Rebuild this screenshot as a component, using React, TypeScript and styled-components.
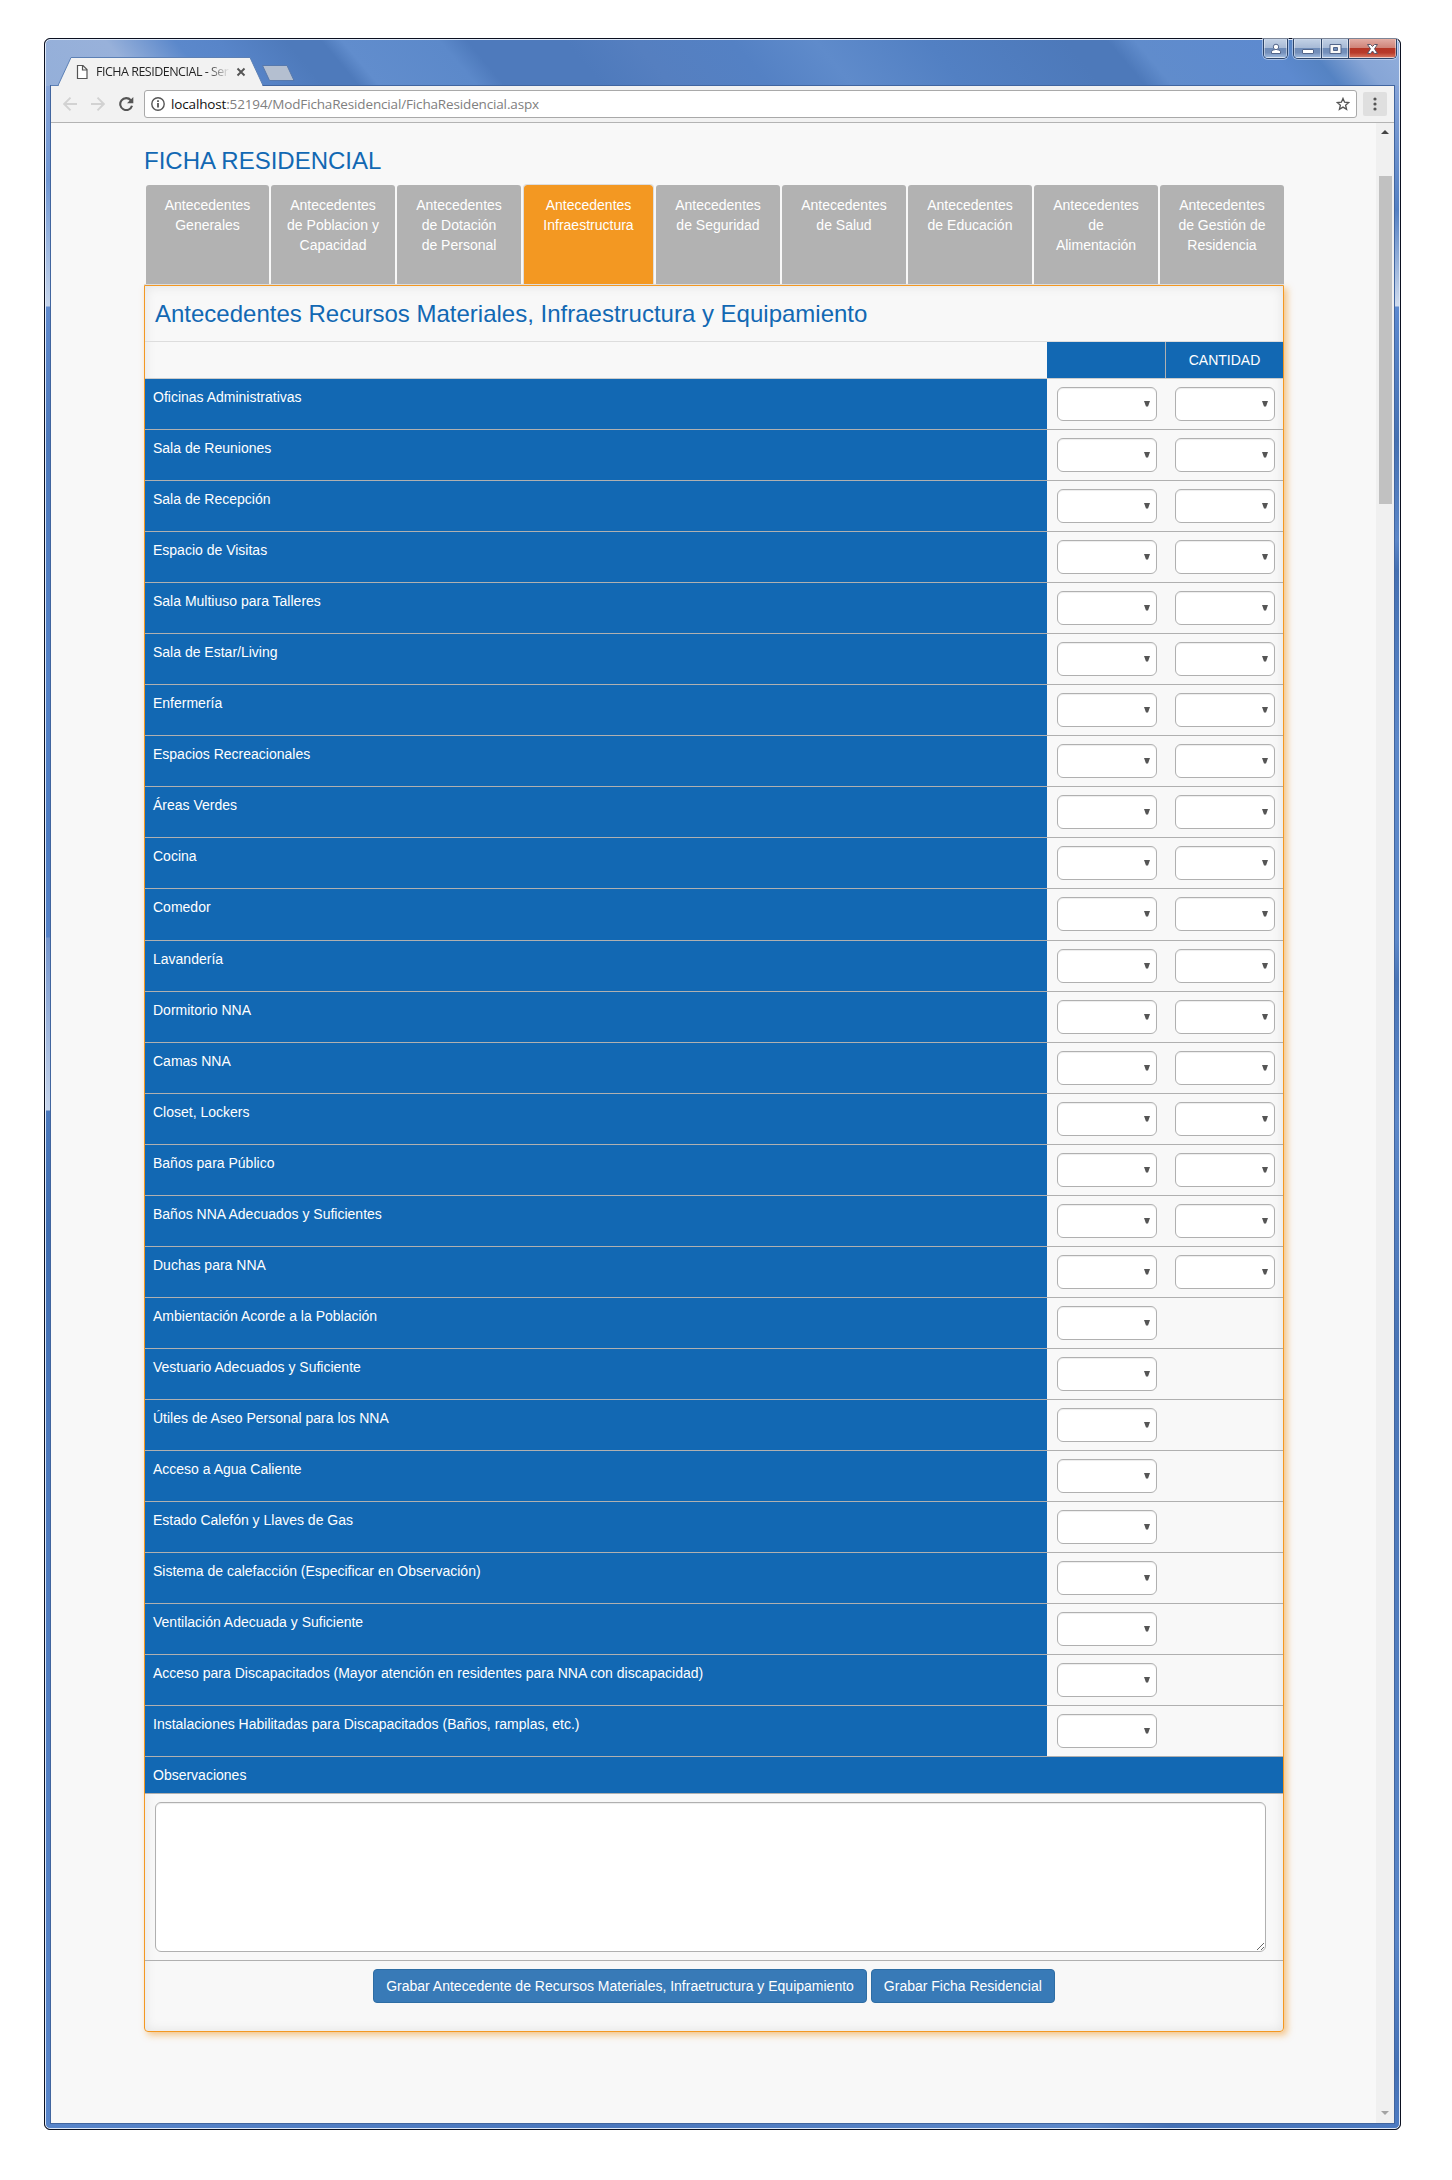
import React from "react";
import styled, { createGlobalStyle } from "styled-components";

const BLUE = "#1268b3";
const LINE = "#b0b0b0";
const ORANGE = "#f39822";

const Global = createGlobalStyle`
  *, *::before, *::after { box-sizing: border-box; }
  body {
    margin: 0;
    background: #fff;
    font-family: "Liberation Sans", Arial, sans-serif;
    font-size: 14px;
    line-height: 20px;
  }
`;

/* ---------- Browser window ---------- */

const Desktop = styled.div`
  width: 1452px;
  height: 2180px;
  padding: 38px 0 0 44px;
  overflow: hidden;
`;

const WindowFrame = styled.div`
  width: 1357px;
  height: 2092px;
  border: 1px solid #0b1020;
  border-radius: 6px;
  background: #0b1020;
`;

const Glass = styled.div`
  height: 100%;
  display: flex;
  flex-direction: column;
  border: 1px solid #dfe9f8;
  border-radius: 5px;
  padding: 0 5px 5px;
  background:
    linear-gradient(50deg, #94afd9 0%, #98b1da 7%, #5b88cb 12%, #5885c9 15%, #4e7abb 20%, #4e7abb 22.5%, #618dcd 24%, #5c89ca 31%, #4e7abc 33%, #4e7abc 40%, #557fc0 45%, #5481c4 52%, #5f8bcb 58%, #5280c3 66%, #4d79ba 76%, #4d79ba 79%, #608ccc 81%, #5d8acf 90%, #5583c3 93%, #86a5d6 96%, #92afdc 100%) 0 0 / 100% 46px no-repeat,
    linear-gradient(180deg, #86a4d8 46px, #6f96d3 140px, #c6d5ec 266px, #5f8ace 267px, #4d79bc 400px, #5482c8 640px, #4c7bc2 800px, #5582c8 897px, #7495cd 898px, #c6d5ec 1070px, #4b79bd 1071px, #3f6db1 1190px, #4c79bd 1400px, #5885ca 100%) 0 0 / 5px 100% no-repeat,
    linear-gradient(180deg, #86a4d8 46px, #5480c3 170px, #d0dcee 266px, #5d8ad0 267px, #4671b2 400px, #5c87c8 500px, #4570b2 530px, #5d88c9 700px, #5d88c9 900px, #4a75b6 940px, #5d88c9 1080px, #4a75b6 1300px, #5a86c8 1900px, #4571b5 2030px, #4d7bc2 100%) 100% 0 / 5px 100% no-repeat,
    linear-gradient(90deg, #5885ca 0%, #4a77bd 40%, #5d88c9 77%, #4571b5 83%, #4d7bc2 100%);
`;

const TitleBar = styled.div`
  height: 46px;
  flex: none;
  display: flex;
  justify-content: space-between;
  align-items: flex-start;
`;

const TabStrip = styled.div`
  position: relative;
  width: 260px;
  height: 46px;
  z-index: 1;
`;

const TabShape = styled.svg`
  display: block;
`;

const TabCaption = styled.div`
  position: absolute;
  left: 45px;
  top: 23px;
  width: 140px;
  height: 18px;
  white-space: nowrap;
  font: 12.5px/18px "Open Sans", "Noto Sans", sans-serif;
  letter-spacing: -0.5px;
  background: linear-gradient(90deg, #222 111px, #f2f2f2 134px);
  background-clip: text;
  -webkit-background-clip: text;
  color: transparent;
`;

const Controls = styled.div`
  display: flex;
  gap: 5px;
  margin: -1px -3px 0 0;
`;

const ControlGroup = styled.div`
  display: flex;
  height: 20px;
  border: 1px solid #2c4469;
  border-top: 0;
  border-radius: 0 0 5px 5px;
  box-shadow: 0 0 0 1px rgba(220, 232, 250, 0.55);
  overflow: hidden;
`;

const ControlButton = styled.div<{ $w: number; $close?: boolean }>`
  width: ${(p) => p.$w}px;
  display: flex;
  align-items: center;
  justify-content: center;
  border: 1px solid rgba(255, 255, 255, 0.45);
  background: ${(p) =>
    p.$close
      ? "linear-gradient(180deg, #e0a79f 0%, #cf8378 46%, #b53525 50%, #b83a2a 75%, #d4705a 100%)"
      : "linear-gradient(180deg, #c0cfe4 0%, #a7bad6 46%, #6f8cb8 50%, #7590bb 75%, #9db8dc 100%)"};
  & + & {
    box-shadow: -1px 0 0 #2c4469;
    margin-left: 1px;
  }
`;

const Client = styled.div`
  flex: 1;
  min-height: 0;
  display: flex;
  flex-direction: column;
  background: #f8f8f8;
  box-shadow: 0 0 0 1px #41659f;
`;

const Toolbar = styled.div`
  height: 37px;
  flex: none;
  display: flex;
  align-items: center;
  padding: 4px 7px 4px 12px;
  background: #f2f2f2;
  border-bottom: 1px solid #b3b3b3;
`;

const NavIcons = styled.div`
  width: 81px;
  display: flex;
  gap: 14px;
`;

const AddressBar = styled.div`
  flex: 1;
  height: 28px;
  display: flex;
  align-items: center;
  padding: 0 6px;
  background: #fff;
  border: 1px solid #a9a9a9;
  border-radius: 3px;
`;

const Url = styled.div`
  flex: 1;
  margin-left: 6px;
  font: 13.5px/20px "Open Sans", "Noto Sans", sans-serif;
  letter-spacing: -0.15px;
  color: #808080;
  span { color: #111; }
`;

const MenuButton = styled.div`
  width: 24px;
  height: 24px;
  margin-left: 6px;
  display: flex;
  align-items: center;
  justify-content: center;
  background: #dfdfdf;
  border-radius: 2px;
`;

const Viewport = styled.div`
  flex: 1;
  min-height: 0;
  display: flex;
`;

const ScrollBar = styled.div`
  width: 18px;
  display: flex;
  flex-direction: column;
  align-items: center;
  justify-content: space-between;
  background: #f0f0f0;
  padding: 7px 0 8px;
  svg { display: block; }
`;

const Thumb = styled.div`
  width: 13px;
  height: 328px;
  margin: 42px 0 auto;
  background: #c1c1c1;
`;

/* ---------- Page ---------- */

const Page = styled.main`
  flex: 1;
  padding: 24px 0 0 93px;
`;

const PageTitle = styled.h1`
  margin: 0 0 10px 0;
  font-size: 24px;
  line-height: 27px;
  font-weight: 400;
  color: ${BLUE};
`;

const Tabs = styled.nav`
  display: flex;
  width: 1140px;
  margin-left: 1px;
`;

const Tab = styled.div<{ $w: number; $active?: boolean }>`
  flex: none;
  width: ${(p) => p.$w}px;
  height: 100px;
  margin: ${(p) => (p.$active ? "0 1px" : "0")};
  padding-top: 10px;
  border: 1px solid ${(p) => (p.$active ? "#ddd" : "transparent")};
  border-bottom: 0;
  border-radius: 4px 4px 0 0;
  background: ${(p) => (p.$active ? ORANGE : "#b2b2b2")};
  background-clip: padding-box;
  color: #fff;
  text-align: center;
  white-space: pre-line;
`;

const Panel = styled.section`
  width: 1140px;
  height: 1747px;
  border: 1px solid ${ORANGE};
  border-radius: 0 0 4px 4px;
  box-shadow:
    0 -1px 0 #ddd,
    3px 3px 7px rgba(243, 152, 34, 0.55),
    inset 0 0 12px rgba(0, 0, 0, 0.09);
  margin-top: 1px;
`;

const PanelTitle = styled.h2`
  height: 55px;
  margin: 0;
  padding: 14px 10px 0;
  font-size: 24px;
  line-height: 27px;
  font-weight: 400;
  color: ${BLUE};
`;

const HeaderRow = styled.div`
  display: flex;
  height: 38px;
  border-top: 1px solid #ddd;
  border-bottom: 1px solid #ccc;
`;

const HeaderCell = styled.div<{ $w: number }>`
  width: ${(p) => p.$w}px;
  padding-top: 8px;
  background: ${BLUE};
  color: #fff;
  text-align: center;
  & + & { border-left: 1px solid ${LINE}; }
`;

const HeaderGap = styled.div`
  width: 902px;
`;

const Row = styled.div<{ $h: number }>`
  display: flex;
  height: ${(p) => p.$h}px;
  border-bottom: 1px solid ${LINE};
`;

const LabelCell = styled.div`
  width: 902px;
  padding: 8px;
  background: ${BLUE};
  color: #fff;
`;

const FieldCell = styled.div`
  width: 118px;
  padding: 8px 0 0 10px;
`;

const SelectBox = styled.div`
  width: 100px;
  height: 34px;
  display: flex;
  align-items: center;
  justify-content: flex-end;
  padding-right: 6px;
  background: #fff;
  border: 1px solid ${LINE};
  border-radius: 6px;
  box-shadow: inset 0 1px 1px rgba(0, 0, 0, 0.075);
`;

const NotesLabel = styled.div`
  height: 37px;
  padding: 8px;
  background: ${BLUE};
  background-clip: padding-box;
  border-bottom: 1px solid ${LINE};
  color: #fff;
`;

const NotesCell = styled.div`
  height: 167px;
  padding: 8px 10px;
  border-bottom: 1px solid ${LINE};
`;

const Notes = styled.textarea`
  display: block;
  width: 1111px;
  height: 150px;
  background: #fff;
  border: 1px solid ${LINE};
  border-radius: 6px;
  box-shadow: inset 0 1px 1px rgba(0, 0, 0, 0.075);
  outline: 0;
`;

const Actions = styled.div`
  display: flex;
  justify-content: center;
  gap: 4px;
  padding-top: 8px;
`;

const Button = styled.button`
  height: 34px;
  padding: 0 12px;
  border: 1px solid #2e6da4;
  border-radius: 4px;
  background: #387ab7;
  color: #fff;
  font: 14px/20px "Liberation Sans", Arial, sans-serif;
`;

const tabs = [
  { w: 125, text: "Antecedentes\nGenerales" },
  { w: 126, text: "Antecedentes\nde Poblacion y\nCapacidad" },
  { w: 126, text: "Antecedentes\nde Dotación\nde Personal" },
  { w: 131, text: "Antecedentes\nInfraestructura", active: true },
  { w: 126, text: "Antecedentes\nde Seguridad" },
  { w: 126, text: "Antecedentes\nde Salud" },
  { w: 126, text: "Antecedentes\nde Educación" },
  { w: 126, text: "Antecedentes\nde\nAlimentación" },
  { w: 126, text: "Antecedentes\nde Gestión de\nResidencia" },
];

const counted = [
  "Oficinas Administrativas",
  "Sala de Reuniones",
  "Sala de Recepción",
  "Espacio de Visitas",
  "Sala Multiuso para Talleres",
  "Sala de Estar/Living",
  "Enfermería",
  "Espacios Recreacionales",
  "Áreas Verdes",
  "Cocina",
  "Comedor",
  "Lavandería",
  "Dormitorio NNA",
  "Camas NNA",
  "Closet, Lockers",
  "Baños para Público",
  "Baños NNA Adecuados y Suficientes",
  "Duchas para NNA",
];

const uncounted = [
  "Ambientación Acorde a la Población",
  "Vestuario Adecuados y Suficiente",
  "Útiles de Aseo Personal para los NNA",
  "Acceso a Agua Caliente",
  "Estado Calefón y Llaves de Gas",
  "Sistema de calefacción (Especificar en Observación)",
  "Ventilación Adecuada y Suficiente",
  "Acceso para Discapacitados (Mayor atención en residentes para NNA con discapacidad)",
  "Instalaciones Habilitadas para Discapacitados (Baños, ramplas, etc.)",
];

const Select = () => (
  <SelectBox>
    <svg width="6" height="6" viewBox="0 0 6 6">
      <path d="M0 0H6L4 5.5H2Z" fill="#555" />
    </svg>
  </SelectBox>
);

const FieldRow = ({ label, count }: { label: string; count: boolean }) => (
  <Row $h={label === "Comedor" ? 52 : 51}>
    <LabelCell>{label}</LabelCell>
    <FieldCell><Select /></FieldCell>
    {count && <FieldCell><Select /></FieldCell>}
  </Row>
);

const BrowserTitle = () => (
  <TitleBar>
    <TabStrip>
      <TabShape width="260" height="46" viewBox="0 0 260 46">
        <path d="M0 45.5H7L20 17.5H199L212 45.5" fill="#f2f2f2" stroke="#5c80b5" />
        <path d="M8 45.5H211" stroke="#f2f2f2" />
        <path d="M212 45.5H260" stroke="#41659f" />
        <path d="M211.500 25.500H236L243 40.500H218.500Z" fill="#b4bfd0" stroke="#5779ad" strokeLinejoin="round" />
        <path d="M26.5 25.5H32L36 29.5V38.5H26.5ZM31.5 25.5V30H36" fill="#fff" stroke="#555" strokeWidth="1.2" />
        <path d="M186.500 28.500L193.500 35.500M193.500 28.500L186.500 35.500" stroke="#555" strokeWidth="1.9" />
      </TabShape>
      <TabCaption>FICHA RESIDENCIAL - Ser</TabCaption>
    </TabStrip>
    <Controls>
      <ControlGroup>
        <ControlButton $w={23}>
          <svg width="12" height="12" viewBox="0 0 12 12">
            <path d="M1.500 10.500V8.800Q1.500 7 3.500 7H8.500Q10.500 7 10.500 8.800V10.500Z" fill="#fff" stroke="#52658a" />
            <circle cx="6" cy="3.900" r="2.700" fill="#fff" stroke="#52658a" />
            <path d="M4.500 7.500H7.500" stroke="#fff" />
          </svg>
        </ControlButton>
      </ControlGroup>
      <ControlGroup>
        <ControlButton $w={27}>
          <svg width="14" height="12" viewBox="0 0 14 12">
            <rect x="1.500" y="6.500" width="11" height="4" rx="0.500" fill="#fff" stroke="#52658a" />
          </svg>
        </ControlButton>
        <ControlButton $w={26}>
          <svg width="13" height="12" viewBox="0 0 13 12">
            <path d="M1 1.500H12V10.500H1ZM4.500 4.500V7.500H8.500V4.500Z" fill="#f8f8f8" fillRule="evenodd" stroke="#52658a" />
          </svg>
        </ControlButton>
        <ControlButton $w={47} $close>
          <svg width="13" height="12" viewBox="0 0 13 12">
            <path d="M1.500 1.500H4.500L6.500 3.500L8.500 1.500H11.500L8.500 5.800L11.500 10.500H8.500L6.500 8L4.500 10.500H1.500L4.500 5.800Z" fill="#fff" stroke="#5a5668" />
          </svg>
        </ControlButton>
      </ControlGroup>
    </Controls>
  </TitleBar>
);

const BrowserToolbar = () => (
  <Toolbar>
    <NavIcons>
      <svg width="14" height="14" viewBox="0 0 14 14" fill="none" stroke="#d2d2d2" strokeWidth="1.900">
        <path d="M14 7H1.500M7.500 0.700L1.200 7L7.500 13.300" />
      </svg>
      <svg width="14" height="14" viewBox="0 0 14 14" fill="none" stroke="#d2d2d2" strokeWidth="1.900">
        <path d="M0 7H12.500M6.500 0.700L12.800 7L6.500 13.300" />
      </svg>
      <svg width="15" height="14" viewBox="0 0 15 14">
        <path d="M11.800 3.200A6 6 0 1 0 13 8.800" fill="none" stroke="#555" strokeWidth="2.100" />
        <path d="M14.300 0V6.300H8Z" fill="#555" />
      </svg>
    </NavIcons>
    <AddressBar>
      <svg width="14" height="14" viewBox="0 0 14 14">
        <circle cx="7" cy="7" r="6.200" fill="none" stroke="#555" strokeWidth="1.400" />
        <path d="M7 6V10.500M7 3.300V5" stroke="#555" strokeWidth="1.800" />
      </svg>
      <Url><span>localhost</span>:52194/ModFichaResidencial/FichaResidencial.aspx</Url>
      <svg width="14" height="14" viewBox="0 0 14 14">
        <path d="M7 1.400L8.600 5.200L12.800 5.500L9.600 8.200L10.600 12.300L7 10.100L3.400 12.300L4.400 8.200L1.200 5.500L5.400 5.200Z" fill="#fff" stroke="#555" strokeWidth="1.300" />
      </svg>
    </AddressBar>
    <MenuButton>
      <svg width="4" height="14" viewBox="0 0 4 14" fill="#555">
        <circle cx="2" cy="2" r="1.600" />
        <circle cx="2" cy="7" r="1.600" />
        <circle cx="2" cy="12" r="1.600" />
      </svg>
    </MenuButton>
  </Toolbar>
);

export default function App() {
  return (
    <Desktop>
      <Global />
      <WindowFrame>
        <Glass>
          <BrowserTitle />
          <Client>
            <BrowserToolbar />
            <Viewport>
              <Page>
                <PageTitle>FICHA RESIDENCIAL</PageTitle>
                <Tabs>
                  {tabs.map((t) => (
                    <Tab key={t.text} $w={t.w} $active={t.active}>{t.text}</Tab>
                  ))}
                </Tabs>
                <Panel>
                  <PanelTitle>Antecedentes Recursos Materiales, Infraestructura y Equipamiento</PanelTitle>
                  <HeaderRow>
                    <HeaderGap />
                    <HeaderCell $w={118} />
                    <HeaderCell $w={118}>CANTIDAD</HeaderCell>
                  </HeaderRow>
                  {counted.map((l) => <FieldRow key={l} label={l} count />)}
                  {uncounted.map((l) => <FieldRow key={l} label={l} count={false} />)}
                  <NotesLabel>Observaciones</NotesLabel>
                  <NotesCell><Notes /></NotesCell>
                  <Actions>
                    <Button>Grabar Antecedente de Recursos Materiales, Infraetructura y Equipamiento</Button>
                    <Button>Grabar Ficha Residencial</Button>
                  </Actions>
                </Panel>
              </Page>
              <ScrollBar>
                <svg width="8" height="4" viewBox="0 0 8 4"><path d="M0 4L4 0L8 4Z" fill="#444" /></svg>
                <Thumb />
                <svg width="8" height="4" viewBox="0 0 8 4"><path d="M0 0L4 4L8 0Z" fill="#a3a3a3" /></svg>
              </ScrollBar>
            </Viewport>
          </Client>
        </Glass>
      </WindowFrame>
    </Desktop>
  );
}
